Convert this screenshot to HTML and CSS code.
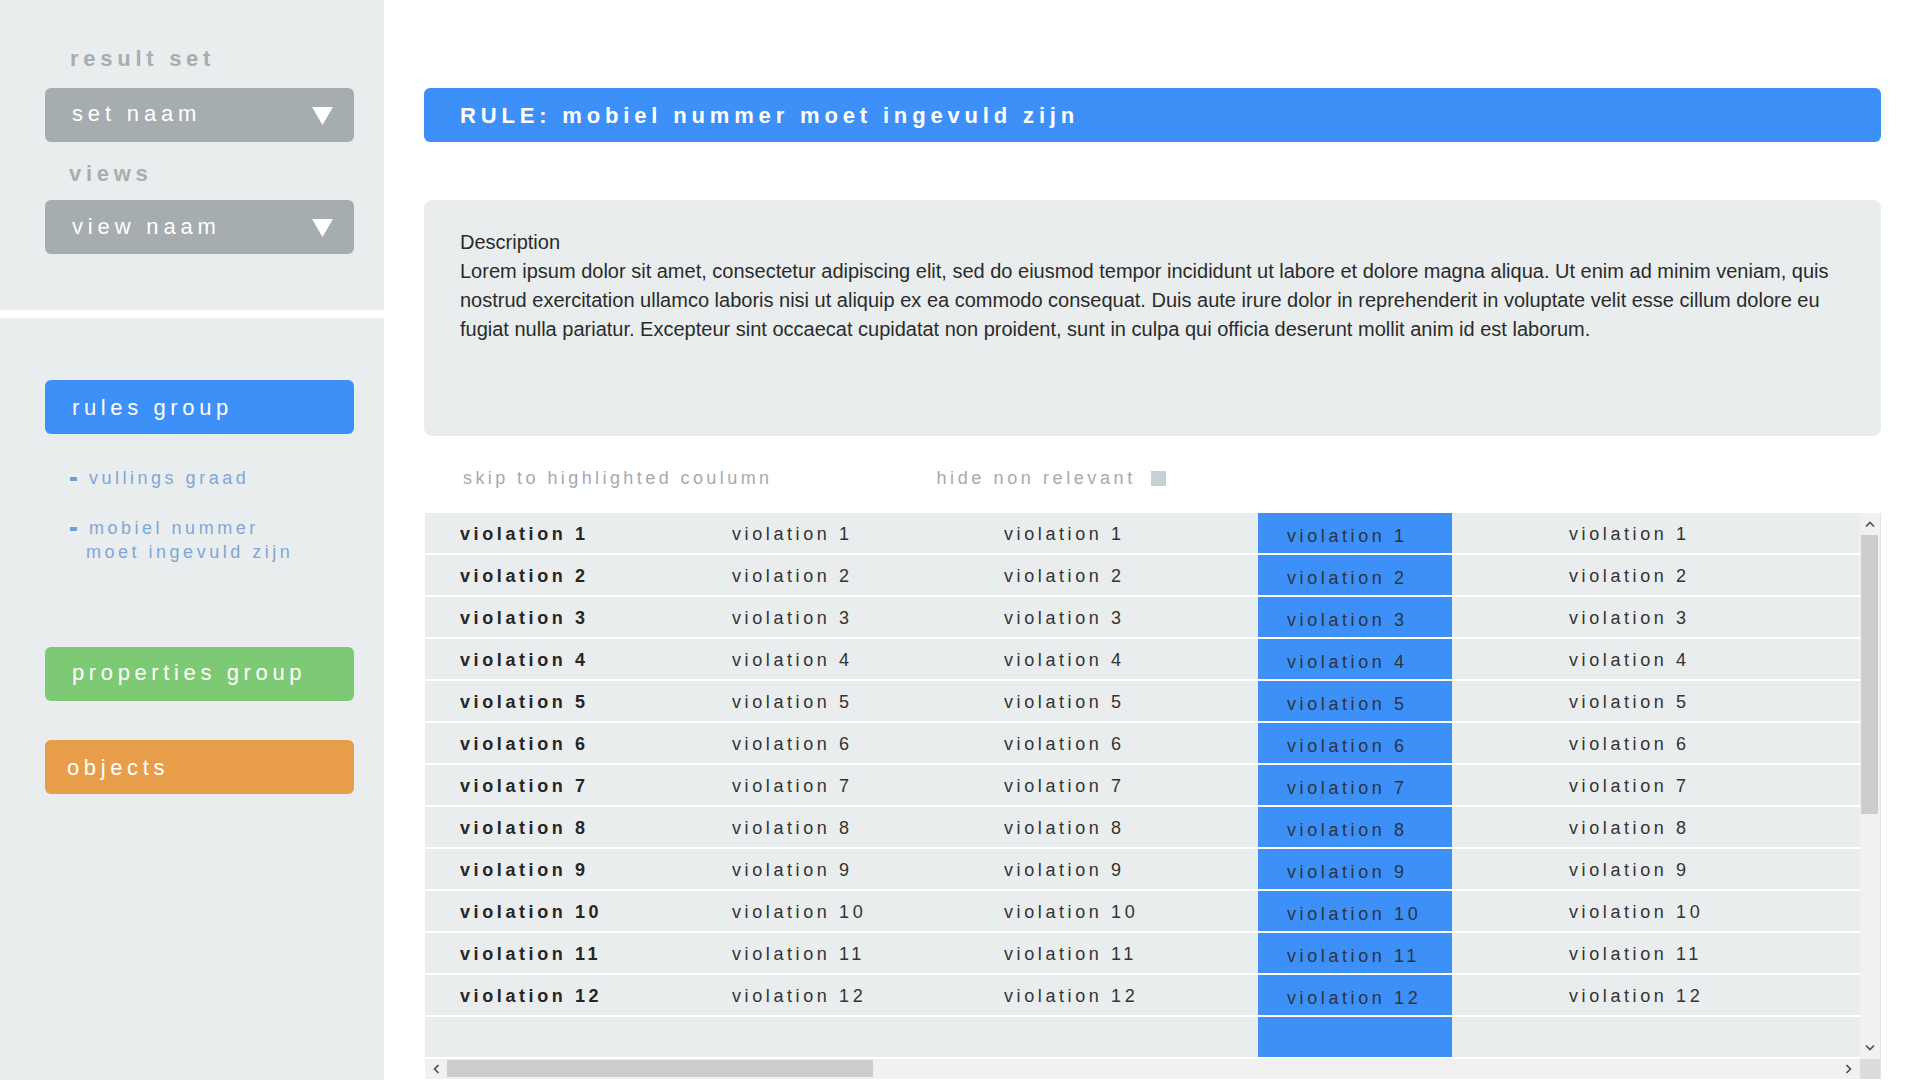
FILE: index.html
```html
<!DOCTYPE html>
<html lang="nl">
<head>
<meta charset="utf-8">
<title>Rule violations</title>
<link rel="stylesheet" href="styles.css">
</head>
<body>
<div class="app">
  <aside class="sidebar">
    <section class="side-top">
      <div class="side-label">result set</div>
      <div class="select">
        <span class="select-text">set naam</span>
        <svg class="caret" viewBox="0 0 21 18" width="21" height="18"><polygon points="0,0 21,0 10.5,18" fill="#fff"/></svg>
      </div>
      <div class="side-label views-label">views</div>
      <div class="select">
        <span class="select-text">view naam</span>
        <svg class="caret" viewBox="0 0 21 18" width="21" height="18"><polygon points="0,0 21,0 10.5,18" fill="#fff"/></svg>
      </div>
    </section>
    <section class="side-bottom">
      <div class="nav-btn nav-blue">rules group</div>
      <ul class="sub-list">
        <li class="sub-item"><span class="dash"></span><span class="sub-text">vullings graad</span></li>
        <li class="sub-item sub-second"><span class="dash"></span><span class="sub-text">mobiel nummer moet ingevuld zijn</span></li>
      </ul>
      <div class="nav-btn nav-green">properties group</div>
      <div class="nav-btn nav-orange">objects</div>
    </section>
  </aside>

  <main class="main">
    <div class="rule-bar">RULE: mobiel nummer moet ingevuld zijn</div>

    <div class="desc-box">
      <p class="desc-title">Description</p>
      <p class="desc-text">Lorem ipsum dolor sit amet, consectetur adipiscing elit, sed do eiusmod tempor incididunt ut labore et dolore magna aliqua. Ut enim ad minim veniam, quis nostrud exercitation ullamco laboris nisi ut aliquip ex ea commodo consequat. Duis aute irure dolor in reprehenderit in voluptate velit esse cillum dolore eu fugiat nulla pariatur. Excepteur sint occaecat cupidatat non proident, sunt in culpa qui officia deserunt mollit anim id est laborum.</p>
    </div>

    <div class="controls">
      <span class="ctrl-skip">skip to highlighted coulumn</span>
      <span class="ctrl-hide">hide non relevant</span>
      <span class="checkbox"></span>
    </div>

    <div class="table-wrap">
      <div class="table-view">
        <div class="row"><div class="cell c1">violation 1</div><div class="cell c2">violation 1</div><div class="cell c3">violation 1</div><div class="cell c4">violation 1</div><div class="cell c5">violation 1</div></div>
        <div class="row"><div class="cell c1">violation 2</div><div class="cell c2">violation 2</div><div class="cell c3">violation 2</div><div class="cell c4">violation 2</div><div class="cell c5">violation 2</div></div>
        <div class="row"><div class="cell c1">violation 3</div><div class="cell c2">violation 3</div><div class="cell c3">violation 3</div><div class="cell c4">violation 3</div><div class="cell c5">violation 3</div></div>
        <div class="row"><div class="cell c1">violation 4</div><div class="cell c2">violation 4</div><div class="cell c3">violation 4</div><div class="cell c4">violation 4</div><div class="cell c5">violation 4</div></div>
        <div class="row"><div class="cell c1">violation 5</div><div class="cell c2">violation 5</div><div class="cell c3">violation 5</div><div class="cell c4">violation 5</div><div class="cell c5">violation 5</div></div>
        <div class="row"><div class="cell c1">violation 6</div><div class="cell c2">violation 6</div><div class="cell c3">violation 6</div><div class="cell c4">violation 6</div><div class="cell c5">violation 6</div></div>
        <div class="row"><div class="cell c1">violation 7</div><div class="cell c2">violation 7</div><div class="cell c3">violation 7</div><div class="cell c4">violation 7</div><div class="cell c5">violation 7</div></div>
        <div class="row"><div class="cell c1">violation 8</div><div class="cell c2">violation 8</div><div class="cell c3">violation 8</div><div class="cell c4">violation 8</div><div class="cell c5">violation 8</div></div>
        <div class="row"><div class="cell c1">violation 9</div><div class="cell c2">violation 9</div><div class="cell c3">violation 9</div><div class="cell c4">violation 9</div><div class="cell c5">violation 9</div></div>
        <div class="row"><div class="cell c1">violation 10</div><div class="cell c2">violation 10</div><div class="cell c3">violation 10</div><div class="cell c4">violation 10</div><div class="cell c5">violation 10</div></div>
        <div class="row"><div class="cell c1">violation 11</div><div class="cell c2">violation 11</div><div class="cell c3">violation 11</div><div class="cell c4">violation 11</div><div class="cell c5">violation 11</div></div>
        <div class="row"><div class="cell c1">violation 12</div><div class="cell c2">violation 12</div><div class="cell c3">violation 12</div><div class="cell c4">violation 12</div><div class="cell c5">violation 12</div></div>
        <div class="row"><div class="cell c1"></div><div class="cell c2"></div><div class="cell c3"></div><div class="cell c4"></div><div class="cell c5"></div></div>
      </div>
      <div class="vscroll">
        <div class="sb-btn"><svg width="10" height="6" viewBox="0 0 10 6"><polyline points="1,5.5 5,1.5 9,5.5" fill="none" stroke="#505050" stroke-width="1.6"/></svg></div>
        <div class="v-thumb"></div>
        <div class="sb-fill"></div>
        <div class="sb-btn"><svg width="10" height="6" viewBox="0 0 10 6"><polyline points="1,0.5 5,4.5 9,0.5" fill="none" stroke="#505050" stroke-width="1.6"/></svg></div>
      </div>
      <div class="hscroll">
        <div class="sb-btn h"><svg width="6" height="10" viewBox="0 0 6 10"><polyline points="5.5,1 1.5,5 5.5,9" fill="none" stroke="#505050" stroke-width="1.6"/></svg></div>
        <div class="h-thumb"></div>
        <div class="sb-fill"></div>
        <div class="sb-btn h"><svg width="6" height="10" viewBox="0 0 6 10"><polyline points="0.5,1 4.5,5 0.5,9" fill="none" stroke="#505050" stroke-width="1.6"/></svg></div>
      </div>
      <div class="sb-corner"></div>
    </div>
  </main>
</div>
</body>
</html>
```

FILE: styles.css
```css
* { box-sizing: border-box; }

html, body {
  margin: 0;
  padding: 0;
  background: #ffffff;
}

body {
  font-family: "Liberation Sans", Arial, sans-serif;
  width: 1920px;
  height: 1080px;
  overflow: hidden;
}

.app {
  display: flex;
  height: 1080px;
}

/* ---------- sidebar ---------- */
.sidebar {
  width: 384px;
  flex: none;
  display: flex;
  flex-direction: column;
  background: #ffffff;
}

.side-top {
  height: 310px;
  background: #e9edee;
  padding: 46px 30px 0 45px;
  display: flex;
  flex-direction: column;
}

.side-bottom {
  flex: 1;
  margin-top: 8px;
  background: #e9edee;
  padding: 62px 30px 0 45px;
  display: flex;
  flex-direction: column;
}

.side-label {
  margin-left: 25px;
  height: 26px;
  line-height: 26px;
  font-size: 22px;
  font-weight: bold;
  letter-spacing: 0.215em;
  color: #a6aeb1;
}

.views-label {
  margin-top: 19px;
  margin-left: 24px;
}

.select {
  margin-top: 16px;
  width: 309px;
  height: 54px;
  border-radius: 6px;
  background: #a6adb0;
  display: flex;
  align-items: center;
  justify-content: space-between;
  padding: 0 21px 0 27px;
}

.views-label + .select {
  margin-top: 13px;
}

.select-text {
  font-size: 22px;
  letter-spacing: 0.22em;
  color: #ffffff;
  margin-top: -3px;
}

.views-label + .select .select-text {
  margin-top: 0;
}

.caret {
  display: block;
  margin-top: 2px;
}

.nav-btn {
  width: 309px;
  height: 54px;
  border-radius: 6px;
  display: flex;
  align-items: center;
  padding-left: 27px;
  font-size: 22px;
  letter-spacing: 0.21em;
  color: #ffffff;
}

.nav-blue { background: #3c90f7; padding-top: 2px; }
.nav-green { background: #7eca74; margin-top: 83px; padding-bottom: 2px; }
.nav-orange { background: #e79d4a; margin-top: 39px; padding-left: 22px; padding-top: 2px; }

.sub-list {
  list-style: none;
  margin: 32px 0 0 0;
  padding: 0 0 0 25px;
}

.sub-item {
  display: flex;
  align-items: flex-start;
}

.sub-second {
  margin-top: 26px;
}

.dash {
  flex: none;
  width: 7px;
  height: 4px;
  margin-top: 11px;
  background: #709fdc;
}

.sub-text {
  margin-left: 9px;
  width: 225px;
  text-indent: 3px;
  font-size: 18px;
  line-height: 24px;
  letter-spacing: 0.195em;
  color: #7fa6d9;
}

/* ---------- main ---------- */
.main {
  flex: 1;
  padding: 88px 39px 0 40px;
  display: flex;
  flex-direction: column;
  min-width: 0;
}

.rule-bar {
  height: 54px;
  border-radius: 6px;
  background: #3c90f7;
  color: #ffffff;
  font-size: 22px;
  font-weight: bold;
  letter-spacing: 0.22em;
  display: flex;
  align-items: center;
  padding-left: 36px;
  padding-top: 2px;
}

.desc-box {
  margin-top: 58px;
  height: 236px;
  border-radius: 8px;
  background: #e9edee;
  padding: 28px 38px 0 36px;
  color: #2b2b2b;
  font-size: 20px;
  line-height: 29px;
}

.desc-box p { margin: 0; }

.controls {
  margin-top: 30px;
  height: 24px;
  display: flex;
  align-items: center;
  padding-left: 39px;
  font-size: 18px;
  letter-spacing: 0.19em;
  color: #a4abae;
}

.ctrl-hide {
  margin-left: 164px;
  letter-spacing: 0.2em;
}

.checkbox {
  width: 15px;
  height: 15px;
  margin-left: 15px;
  background: #c8d0d3;
}

/* ---------- table ---------- */
.table-wrap {
  margin-top: 23px;
  margin-left: 1px;
  display: grid;
  grid-template-columns: 1fr 20px;
  grid-template-rows: auto 20px;
  border-right: 1px solid #e4e4e4;
}

.table-view {
  overflow: hidden;
}

.row {
  display: grid;
  grid-template-columns: 272px 272px 289px 194px 1fr;
  height: 42px;
  border-bottom: 2px solid #ffffff;
  background: #e9edee;
}

.cell {
  display: flex;
  align-items: center;
  padding-left: 35px;
  padding-top: 2px;
  font-size: 18px;
  letter-spacing: 0.2em;
  color: #333333;
  white-space: nowrap;
}

.c1 {
  font-weight: bold;
  color: #262626;
}

.c4 {
  background: #3c90f7;
  padding-left: 29px;
  padding-top: 6px;
  color: #2d3540;
}

.c5 {
  padding-left: 117px;
}

.vscroll {
  background: #f1f1f1;
  display: flex;
  flex-direction: column;
}

.hscroll {
  background: #f1f1f1;
  display: flex;
}

.sb-btn {
  flex: none;
  height: 22px;
  display: flex;
  align-items: center;
  justify-content: center;
}

.sb-btn.h {
  height: auto;
  width: 22px;
}

.sb-fill {
  flex: 1;
}

.v-thumb {
  flex: none;
  height: 279px;
  margin: 0 2px 0 1px;
  background: #cdcdcd;
}

.h-thumb {
  flex: none;
  width: 426px;
  margin: 1px 0 2px 0;
  background: #cdcdcd;
}

.sb-corner {
  background: #dcdcdc;
}
```
